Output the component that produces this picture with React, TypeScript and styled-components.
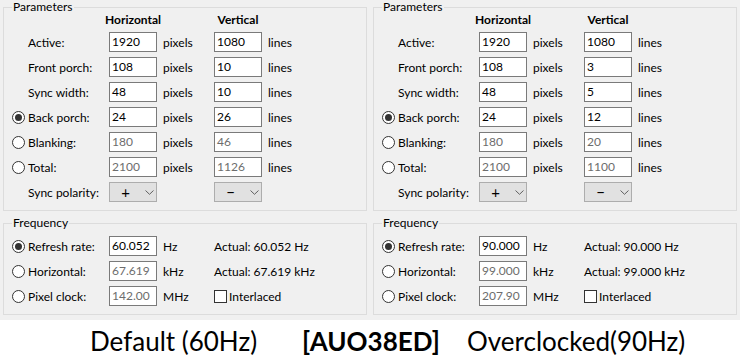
import React from 'react'
import styled, { createGlobalStyle } from 'styled-components'

type TimingRow = {
  label: string
  radio?: boolean
  checked?: boolean
  h: string
  v: string
  dim?: boolean
}

type PanelData = {
  rows: TimingRow[]
  refresh: string
  horizontal: string
  clock: string
}

const panels: PanelData[] = [
  {
    rows: [
      { label: 'Active:', h: '1920', v: '1080' },
      { label: 'Front porch:', h: '108', v: '10' },
      { label: 'Sync width:', h: '48', v: '10' },
      { label: 'Back porch:', radio: true, checked: true, h: '24', v: '26' },
      { label: 'Blanking:', radio: true, h: '180', v: '46', dim: true },
      { label: 'Total:', radio: true, h: '2100', v: '1126', dim: true },
    ],
    refresh: '60.052',
    horizontal: '67.619',
    clock: '142.00',
  },
  {
    rows: [
      { label: 'Active:', h: '1920', v: '1080' },
      { label: 'Front porch:', h: '108', v: '3' },
      { label: 'Sync width:', h: '48', v: '5' },
      { label: 'Back porch:', radio: true, checked: true, h: '24', v: '12' },
      { label: 'Blanking:', radio: true, h: '180', v: '20', dim: true },
      { label: 'Total:', radio: true, h: '2100', v: '1100', dim: true },
    ],
    refresh: '90.000',
    horizontal: '99.000',
    clock: '207.90',
  },
]

const GlobalStyle = createGlobalStyle`
  html, body {
    margin: 0;
    padding: 0;
    background: #fff;
  }
  body {
    font-family: Lato, "Noto Sans", sans-serif;
    color: #000;
  }
`

const Screen = styled.div`
  width: 740px;
  height: 361px;
  display: flex;
  flex-direction: column;
  overflow: hidden;
`

const Dialogs = styled.div`
  display: flex;
  height: 320px;
  background: #f0f0f0;
`

const Panel = styled.div`
  width: 370px;
  box-sizing: border-box;
  padding: 1px 0 0 3px;
  display: flex;
  flex-direction: column;
  gap: 6px;
`

const Group = styled.fieldset`
  margin: 0;
  width: 364px;
  box-sizing: border-box;
  border: 1px solid #dcdcdc;
  padding: 0 0 8px 8px;
  min-width: 0;
`

const Legend = styled.legend`
  font-size: 12px;
  line-height: 12px;
  padding: 0 1px;
  margin: 0;
`

const FieldGrid = styled.div<{ $top: number }>`
  display: grid;
  grid-template-columns: 16px 81px 48px 57px 48px auto;
  row-gap: 5px;
  align-items: center;
  padding-top: ${p => p.$top}px;
  font-size: 12px;
`

const Heading = styled.div<{ $col: number }>`
  grid-column: ${p => p.$col};
  height: 14px;
  line-height: 14px;
  font-weight: 700;
  white-space: nowrap;
  justify-self: center;
`

const Radio = styled.span<{ $checked?: boolean }>`
  grid-column: 1;
  position: relative;
  width: 13px;
  height: 13px;
  box-sizing: border-box;
  border: 1px solid #333;
  border-radius: 50%;
  background: #fff;

  &::after {
    content: '';
    display: ${p => (p.$checked ? 'block' : 'none')};
    position: absolute;
    left: 2px;
    top: 2px;
    width: 7px;
    height: 7px;
    border-radius: 50%;
    background: #333;
  }
`

const Label = styled.span`
  grid-column: 2;
  white-space: nowrap;
`

const TextBox = styled.div<{ $dim?: boolean }>`
  height: 20px;
  box-sizing: border-box;
  border: 1px solid #7a7a7a;
  background: #fff;
  padding-left: 2px;
  line-height: 18px;
  color: ${p => (p.$dim ? '#6d6d6d' : '#000')};
`

const Unit = styled.span`
  padding-left: 6px;
  white-space: nowrap;
`

const Combo = styled.div`
  height: 20px;
  box-sizing: border-box;
  border: 1px solid #adadad;
  background: #e1e1e1;
  display: flex;
  align-items: center;
`

const ComboValue = styled.span`
  width: 31px;
  text-align: center;
  font-size: 15px;
  line-height: 18px;
`

const Extra = styled.div`
  grid-column: 5 / -1;
  display: flex;
  align-items: center;
  gap: 2px;
  white-space: nowrap;
`

const CheckBox = styled.span`
  width: 13px;
  height: 13px;
  box-sizing: border-box;
  border: 1px solid #333;
  background: #fff;
`

const Caption = styled.div`
  flex: 1;
  display: flex;
  align-items: center;
  padding-left: 90px;
  font-family: Lato, "Noto Sans", sans-serif;
  font-size: 26px;
  background: #fff;
`

const CaptionCell = styled.span<{ $w?: number; $bold?: boolean }>`
  width: ${p => (p.$w ? `${p.$w}px` : 'auto')};
  flex: none;
  white-space: nowrap;
  font-weight: ${p => (p.$bold ? 700 : 400)};
`

const Chevron = () => (
  <svg width="9" height="5" viewBox="0 0 9 5" style={{ marginLeft: 4 }}>
    <path d="M0.5 0.5 L4.5 4.3 L8.5 0.5" fill="none" stroke="#606060" strokeWidth="1" />
  </svg>
)

const TimingPanel = ({ data }: { data: PanelData }) => (
  <Panel>
    <Group>
      <Legend>Parameters</Legend>
      <FieldGrid $top={0}>
        <Heading $col={3}>Horizontal</Heading>
        <Heading $col={5}>Vertical</Heading>
        {data.rows.map(row => (
          <React.Fragment key={row.label}>
            {row.radio && <Radio $checked={row.checked} />}
            <Label>{row.label}</Label>
            <TextBox $dim={row.dim} style={{ gridColumn: 3 }}>{row.h}</TextBox>
            <Unit>pixels</Unit>
            <TextBox $dim={row.dim}>{row.v}</TextBox>
            <Unit>lines</Unit>
          </React.Fragment>
        ))}
        <Label>Sync polarity:</Label>
        <Combo>
          <ComboValue>+</ComboValue>
          <Chevron />
        </Combo>
        <span />
        <Combo>
          <ComboValue>−</ComboValue>
          <Chevron />
        </Combo>
      </FieldGrid>
    </Group>
    <Group>
      <Legend>Frequency</Legend>
      <FieldGrid $top={7}>
        <Radio $checked />
        <Label>Refresh rate:</Label>
        <TextBox>{data.refresh}</TextBox>
        <Unit>Hz</Unit>
        <Extra>Actual: {data.refresh} Hz</Extra>

        <Radio />
        <Label>Horizontal:</Label>
        <TextBox $dim>{data.horizontal}</TextBox>
        <Unit>kHz</Unit>
        <Extra>Actual: {data.horizontal} kHz</Extra>

        <Radio />
        <Label>Pixel clock:</Label>
        <TextBox $dim>{data.clock}</TextBox>
        <Unit>MHz</Unit>
        <Extra>
          <CheckBox />
          Interlaced
        </Extra>
      </FieldGrid>
    </Group>
  </Panel>
)

const App = () => (
  <Screen>
    <GlobalStyle />
    <Dialogs>
      {panels.map((p, i) => (
        <TimingPanel key={i} data={p} />
      ))}
    </Dialogs>
    <Caption>
      <CaptionCell $w={212}>Default (60Hz)</CaptionCell>
      <CaptionCell $w={165} $bold>[AUO38ED]</CaptionCell>
      <CaptionCell>Overclocked(90Hz)</CaptionCell>
    </Caption>
  </Screen>
)

export default App
